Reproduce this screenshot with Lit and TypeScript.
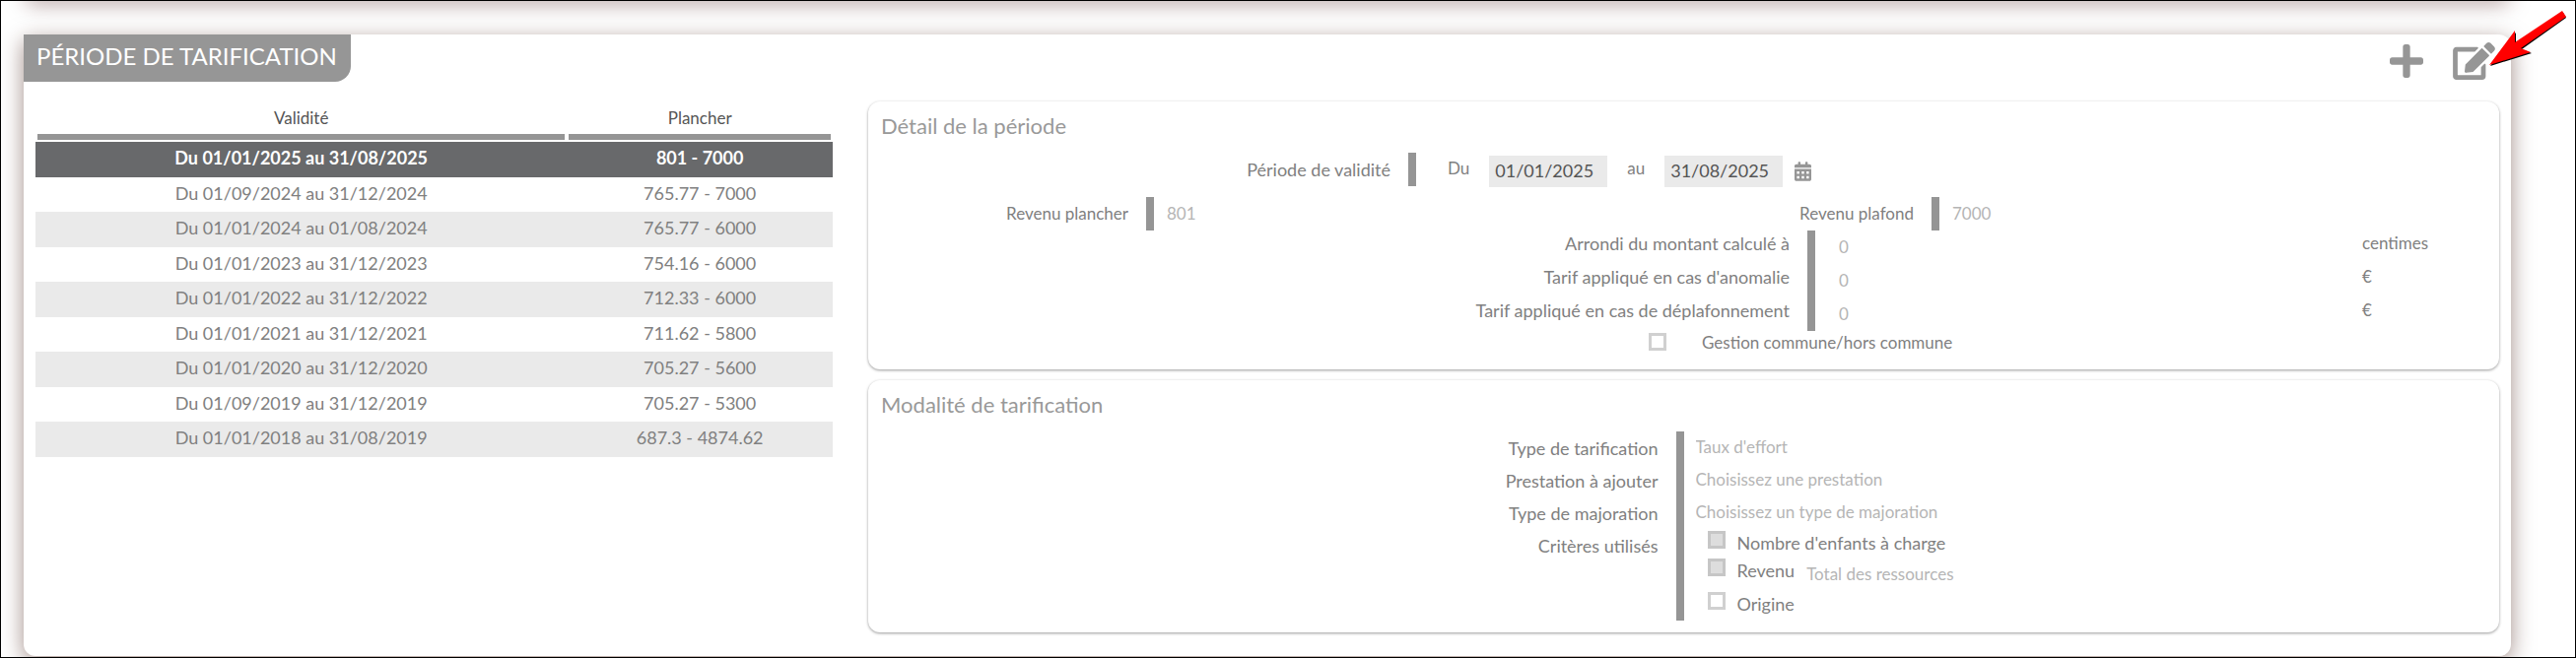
import { LitElement, html, css, svg } from "lit";
import { customElement, state } from "lit/decorators.js";
import { classMap } from "lit/directives/class-map.js";

interface Period {
  validity: string;
  floor: string;
}

const PERIODS: Period[] = [
  { validity: "Du 01/01/2025 au 31/08/2025", floor: "801 - 7000" },
  { validity: "Du 01/09/2024 au 31/12/2024", floor: "765.77 - 7000" },
  { validity: "Du 01/01/2024 au 01/08/2024", floor: "765.77 - 6000" },
  { validity: "Du 01/01/2023 au 31/12/2023", floor: "754.16 - 6000" },
  { validity: "Du 01/01/2022 au 31/12/2022", floor: "712.33 - 6000" },
  { validity: "Du 01/01/2021 au 31/12/2021", floor: "711.62 - 5800" },
  { validity: "Du 01/01/2020 au 31/12/2020", floor: "705.27 - 5600" },
  { validity: "Du 01/09/2019 au 31/12/2019", floor: "705.27 - 5300" },
  { validity: "Du 01/01/2018 au 31/08/2019", floor: "687.3 - 4874.62" },
];

const plusIcon = svg`<path d="M416 208H272V64c0-17.67-14.33-32-32-32h-32c-17.67 0-32 14.33-32 32v144H32c-17.67 0-32 14.33-32 32v32c0 17.67 14.33 32 32 32h144v144c0 17.67 14.33 32 32 32h32c17.67 0 32-14.33 32-32V304h144c17.67 0 32-14.33 32-32v-32c0-17.67-14.33-32-32-32z"/>`;
const editIcon = svg`<path d="M402.6 83.2l90.2 90.2c3.8 3.8 3.8 10 0 13.8L274.4 405.6l-92.8 10.3c-12.4 1.4-22.9-9.1-21.5-21.5l10.3-92.8L388.8 83.2c3.8-3.8 10-3.8 13.8 0zm162-22.9l-48.8-48.8c-15.2-15.2-39.9-15.2-55.2 0l-35.4 35.4c-3.8 3.8-3.8 10 0 13.8l90.2 90.2c3.8 3.8 10 3.8 13.8 0l35.4-35.4c15.2-15.3 15.2-40 0-55.2zM384 346.2V448H64V128h229.8c3.2 0 6.2-1.3 8.5-3.5l40-40c7.6-7.6 2.2-20.5-8.5-20.5H48C21.5 64 0 85.5 0 112v352c0 26.5 21.5 48 48 48h352c26.5 0 48-21.5 48-48V306.2c0-10.7-12.9-16-20.5-8.5l-40 40c-2.2 2.3-3.5 5.3-3.5 8.5z"/>`;
const calendarIcon = svg`<path fill-rule="evenodd" d="M0 464c0 26.5 21.5 48 48 48h352c26.5 0 48-21.5 48-48V192H0zM64 256h64v64H64zM192 256h64v64h-64zM320 256h64v64h-64zM64 384h64v64H64zM192 384h64v64h-64zM320 384h64v64h-64zM400 64h-48V16c0-8.8-7.2-16-16-16h-32c-8.8 0-16 7.2-16 16v48H160V16c0-8.8-7.2-16-16-16h-32c-8.8 0-16 7.2-16 16v48H48C21.5 64 0 85.5 0 112v48h448v-48c0-26.5-21.5-48-48-48z"/>`;

@customElement("app-root")
export class AppRoot extends LitElement {
  static styles = css`
    :host {
      display: block;
      font-family: Lato, "Open Sans", sans-serif;
      font-size: 17px;
      color: #808080;
    }
    * { box-sizing: border-box; }
    .page {
      position: relative;
      min-height: 100vh;
      overflow: hidden;
      border: 1px solid #000;
      background: #fff;
      padding: 0 65px 1px 23px;
    }
    .previous {
      height: 12px;
      margin-top: -12px;
      border-radius: 0 0 12px 12px;
      background: #fff;
      box-shadow: 0 2px 20px rgba(70, 20, 20, 0.5);
    }
    .panel {
      margin-top: 34px;
      position: relative;
      border-radius: 0 12px 12px 12px;
      background: #fff;
      box-shadow: 0 6px 22px rgba(70, 30, 20, 0.5);
      padding-bottom: 24px;
    }
    .head {
      display: flex;
      justify-content: space-between;
      align-items: flex-start;
    }
    .badge {
      margin: 0;
      padding: 0 14px 0 13px;
      height: 48px;
      border-radius: 0 0 16px 0;
      background: #969696;
      color: #fff;
      font-size: 24px;
      font-weight: 400;
      line-height: 44px;
    }
    .actions {
      display: flex;
      gap: 30px;
      align-items: center;
      padding: 8px 16px 0 0;
    }
    button {
      display: flex;
      margin: 0;
      padding: 0;
      border: 0;
      background: none;
      color: #969696;
      cursor: pointer;
    }
    svg { display: block; fill: currentColor; }
    .body {
      display: grid;
      grid-template-columns: 809fr 1655fr;
      gap: 36px;
      align-items: start;
      padding: 20px 12px 0;
    }
    table {
      width: 100%;
      table-layout: fixed;
      border-spacing: 0;
      text-align: center;
      font-size: 18px;
    }
    th {
      width: 66%;
      padding: 0 2px 2px;
      font-weight: 400;
      font-size: 17px;
      line-height: 33px;
      color: #555;
    }
    th + th { width: 33%; }
    .rule { border-bottom: 6px solid #959595; }
    td {
      height: 35px;
      padding: 0;
      line-height: 32px;
      vertical-align: top;
    }
    tbody tr { cursor: pointer; }
    tbody tr:nth-child(odd) td { height: 36px; background: #eaeaea; }
    tbody tr.selected td { background: #68696b; color: #fff; font-weight: 700; }
    .cards { display: grid; gap: 11px; min-width: 0; }
    .card {
      border-radius: 12px;
      background: #fff;
      box-shadow: 0 1px 3px rgba(0, 0, 0, 0.4);
      padding: 12px 13px;
    }
    h2 {
      margin: 0 0 14px;
      font-size: 22px;
      font-weight: 400;
      line-height: 26px;
      color: #999;
    }
    .row { display: grid; align-items: start; }
    .row.validity { grid-template-columns: 1fr 2fr; margin-bottom: 10px; }
    .row.income { grid-template-columns: 277fr 540fr 257fr 555fr; }
    .row.amounts { grid-template-columns: 948fr 555fr 126fr; }
    .row.shared { grid-template-columns: 779fr 850fr; }
    .row.terms { grid-template-columns: 1fr 1fr; align-items: stretch; }
    .name {
      display: block;
      padding-right: 18px;
      border-right: 8px solid #959595;
      line-height: 34px;
      text-align: right;
      white-space: nowrap;
    }
    .validity .name, .amounts .name, .labels, .criteria label { font-size: 18px; }
    .amounts .name { height: 34px; line-height: 26px; }
    .unit { line-height: 26px; }
    .dates {
      display: flex;
      align-items: flex-start;
      gap: 20px;
      padding: 3px 0 0 32px;
      line-height: 26px;
    }
    .pick { display: flex; align-items: center; gap: 12px; }
    input, select {
      appearance: none;
      margin: 0;
      padding: 0;
      border: 0;
      border-radius: 0;
      background: none;
      font: inherit;
      color: #b5b5b5;
      opacity: 1;
      min-width: 0;
    }
    .date {
      width: 120px;
      height: 32px;
      padding: 0 6px 3px;
      background: #eaeaea;
      font-size: 18px;
      color: #555;
    }
    .value { height: 34px; padding: 0 0 2px 13px; }
    .amounts .value { padding-left: 24px; }
    .check {
      width: 18px;
      height: 18px;
      margin-top: 2px;
      flex: none;
      border: 3px solid #d0d0d0;
    }
    .check:checked { background: #ddd; border-color: #c6c6c6; }
    .option { display: flex; align-items: flex-start; }
    .option label { line-height: 28px; }
    .shared .option { grid-column: 2; gap: 36px; height: 27px; }
    .shared .option label { line-height: 24px; }
    .labels { border-right: 8px solid #959595; padding: 1px 18px 0 0; text-align: right; }
    .labels > * { display: block; line-height: 33px; }
    .fields { padding: 0 0 3px 12px; }
    .choice { display: block; width: 100%; height: 33px; padding-bottom: 3px; }
    .criteria { padding-left: 12px; }
    .criteria .option { gap: 12px; height: 28px; }
    .criteria .option.wide { height: 34px; }
    .total { height: 34px; width: 300px; }
    .arrow { position: absolute; top: 10px; right: 8px; }
  `;

  @state() private selected = 0;

  private amount(id: string, label: string, unit: string) {
    return html`
      <label class="name" for=${id}>${label}</label>
      <input class="value" id=${id} value="0" readonly />
      <span class="unit">${unit}</span>
    `;
  }

  private choice(id: string, text: string) {
    return html`<select class="choice" id=${id} disabled><option>${text}</option></select>`;
  }

  render() {
    return html`
      <div class="page">
        <div class="previous"></div>
        <section class="panel">
          <header class="head">
            <h1 class="badge">PÉRIODE DE TARIFICATION</h1>
            <div class="actions">
              <button aria-label="Ajouter">
                <svg width="34" height="34" viewBox="0 32 448 448">${plusIcon}</svg>
              </button>
              <button aria-label="Modifier">
                <svg width="43" height="38" viewBox="0 0 576 512">${editIcon}</svg>
              </button>
            </div>
          </header>
          <div class="body">
            <table>
              <thead>
                <tr>
                  <th><div class="rule">Validité</div></th>
                  <th><div class="rule">Plancher</div></th>
                </tr>
              </thead>
              <tbody>
                ${PERIODS.map(
                  (p, i) => html`<tr
                    class=${classMap({ selected: i === this.selected })}
                    @click=${() => (this.selected = i)}
                  >
                    <td>${p.validity}</td>
                    <td>${p.floor}</td>
                  </tr>`
                )}
              </tbody>
            </table>
            <div class="cards">
              <section class="card">
                <h2>Détail de la période</h2>
                <div class="row validity">
                  <span class="name">Période de validité</span>
                  <div class="dates">
                    <label for="from">Du</label>
                    <input class="date" id="from" value="01/01/2025" />
                    <label for="to">au</label>
                    <div class="pick">
                      <input class="date" id="to" value="31/08/2025" />
                      <button aria-label="Calendrier">
                        <svg width="17" height="20" viewBox="0 0 448 512">${calendarIcon}</svg>
                      </button>
                    </div>
                  </div>
                </div>
                <div class="row income">
                  <label class="name" for="floor">Revenu plancher</label>
                  <input class="value" id="floor" value="801" readonly />
                  <label class="name" for="ceiling">Revenu plafond</label>
                  <input class="value" id="ceiling" value="7000" readonly />
                </div>
                <div class="row amounts">
                  ${this.amount("rounding", "Arrondi du montant calculé à", "centimes")}
                  ${this.amount("anomaly", "Tarif appliqué en cas d'anomalie", "€")}
                  ${this.amount("uncapped", "Tarif appliqué en cas de déplafonnement", "€")}
                </div>
                <div class="row shared">
                  <div class="option">
                    <input class="check" type="checkbox" id="shared" />
                    <label for="shared">Gestion commune/hors commune</label>
                  </div>
                </div>
              </section>
              <section class="card">
                <h2>Modalité de tarification</h2>
                <div class="row terms">
                  <div class="labels">
                    <label for="type">Type de tarification</label>
                    <label for="service">Prestation à ajouter</label>
                    <label for="increase">Type de majoration</label>
                    <span>Critères utilisés</span>
                  </div>
                  <div class="fields">
                    ${this.choice("type", "Taux d'effort")}
                    ${this.choice("service", "Choisissez une prestation")}
                    ${this.choice("increase", "Choisissez un type de majoration")}
                    <div class="criteria">
                      <div class="option">
                        <input class="check" type="checkbox" id="children" checked disabled />
                        <label for="children">Nombre d'enfants à charge</label>
                      </div>
                      <div class="option wide">
                        <input class="check" type="checkbox" id="income" checked disabled />
                        <label for="income">Revenu</label>
                        <select class="total" aria-label="Revenu" disabled>
                          <option>Total des ressources</option>
                        </select>
                      </div>
                      <div class="option">
                        <input class="check" type="checkbox" id="origin" disabled />
                        <label for="origin">Origine</label>
                      </div>
                    </div>
                  </div>
                </div>
              </section>
            </div>
          </div>
        </section>
        <svg class="arrow" width="79" height="57" viewBox="0 0 79 57">
          <path fill="#000" d="M1 56L27 22l0 11L75 2l3 5L33 39l10 4z" />
          <path fill="#f00" d="M0 55L26 20l0 12L74 0l4 6L32 38l10 4z" />
        </svg>
      </div>
    `;
  }
}
